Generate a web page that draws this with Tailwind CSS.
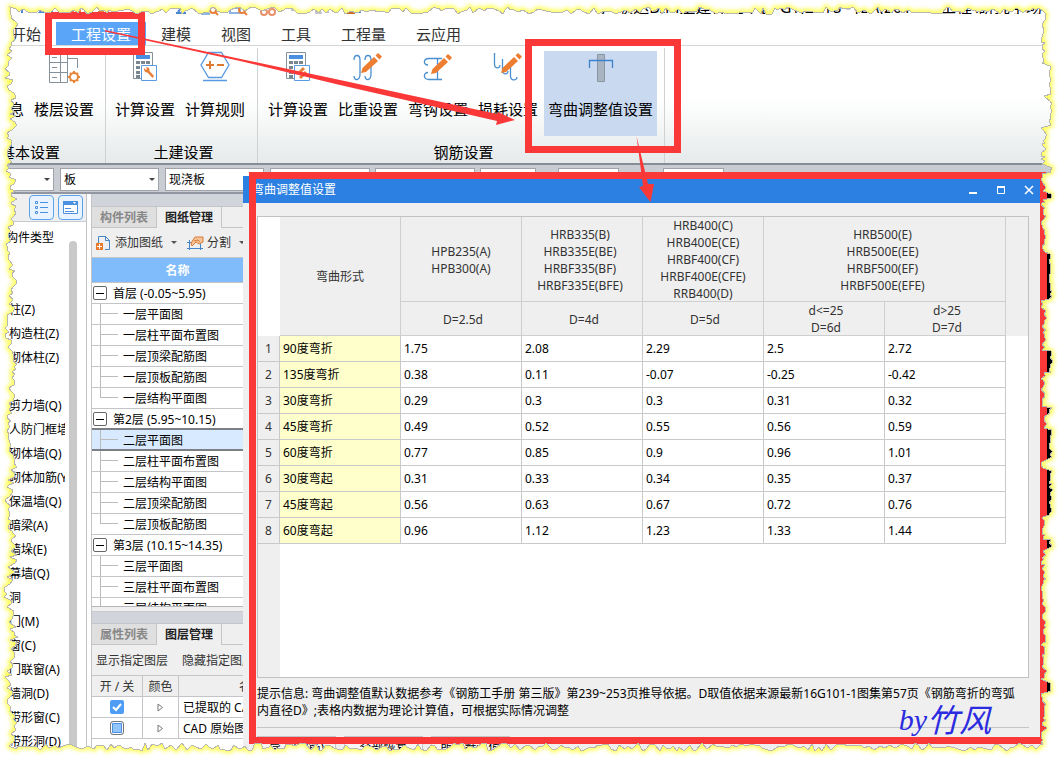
<!DOCTYPE html>
<html lang="zh-CN">
<head>
<meta charset="utf-8">
<title>弯曲调整值设置</title>
<script src="https://cdn.jsdelivr.net/npm/@tailwindcss/browser@4"></script>
</head>
<body class="bg-white text-black font-['Noto_Sans','Noto_Sans_CJK_SC',sans-serif]">
<div class="relative flex h-screen flex-col overflow-hidden bg-white text-[12px] leading-[17px]">

  <!-- title bar -->
  <header class="flex h-[22px] shrink-0 justify-between whitespace-nowrap">
    <div class="flex w-[410px] shrink-0 pl-5" aria-hidden="true">
      <svg class="h-4 w-[380px]" viewBox="0 0 380 16" fill="none" stroke-width="2">
        <path d="M2 2V13M20 12L26 4L32 12Z" stroke="#4a86d0"/>
        <path d="M48 12H54M60 8V13M78 12H84" stroke="#e8803a"/>
        <path d="M90 1H118V12M156 13H166M158 12L164 5" stroke="#4a86d0"/>
        <path d="M182 2V14H190M210 13H220V8H210Z" stroke="#8fb4e0"/>
        <circle cx="193" cy="10" r="3" stroke="#e8803a"/><path d="M195 12L198 15" stroke="#e8803a"/>
        <circle cx="222" cy="10" r="3" stroke="#e8803a"/><path d="M224 12L227 15" stroke="#e8803a"/>
        <circle cx="244" cy="12" r="3" stroke="#e8906a"/><circle cx="252" cy="12" r="3" stroke="#e8906a"/>
        <path d="M271 10H283M296 4V13H302M308 4V13" stroke="#c4c8ce"/>
        <path d="M327 7H334V13H327Z" fill="#e8803a" stroke="#c86a28"/><path d="M328 10H333M330 8V12" stroke="#fff" stroke-width="1"/>
        <path d="M336 12H341" stroke="#4a86d0"/>
      </svg>
    </div>
    <h1 class="mr-4 -mt-1 h-[18px] overflow-hidden text-[16px] leading-[22px]">广联达BIM土建计量平台 GTJ2018 - [E:\(2019-1-工程\研究学场</h1>
  </header>

  <!-- ribbon tabs -->
  <nav class="-ml-1 flex h-6 shrink-0 items-stretch border-b border-[#d4d6d8] text-[15px] leading-[22px] text-[#333]">
    <button class="px-[15px]">开始</button>
    <button class="bg-[#5aa5f8] px-[15px] text-white">工程设置</button>
    <button class="px-[15px]">建模</button>
    <button class="px-[15px]">视图</button>
    <button class="px-[15px]">工具</button>
    <button class="px-[15px]">工程量</button>
    <button class="px-[15px]">云应用</button>
  </nav>

  <!-- ribbon -->
  <section class="-ml-[41px] flex h-[119px] shrink-0 whitespace-nowrap border-b-2 border-[#858d95] bg-linear-to-b from-white from-45% to-[#e6eaea] pt-[2px] text-[15px] leading-[22px]">
    <div class="flex w-[147px] flex-col justify-between border-r border-[#cfd2d4]">
      <div class="flex pt-[3px]">
        <button class="flex w-[70px] flex-col items-center"><span class="h-[47px]"></span>工程信息</button>
        <button class="flex w-[70px] flex-col items-center"><span class="flex h-[47px] w-9"><svg width="36" height="34" viewBox="0 0 36 34" fill="none" stroke="#84909a"><path d="M3.500 1.500H21.500V31.500H3.500ZM3.500 11.500H21.500M3.500 21.500H21.500M14.500 1.500V31.500M6 6.500H11M6 16.500H11M6 26.500H11M21.500 7.500H31.500V17"/><circle cx="28" cy="26" r="4" stroke="#e8873a" stroke-width="2"/><path d="M28 20V22M28 30V32M22 26H24M32 26H34M24 22L25 23M31 29L32 30M32 22L31 23M25 29L24 30" stroke="#e8873a" stroke-width="2"/></svg></span>楼层设置</button>
      </div>
      <span class="pr-1 text-center">基本设置</span>
    </div>
    <div class="flex w-[152px] flex-col justify-between border-r border-[#cfd2d4] pl-1">
      <div class="flex pt-[3px]">
        <button class="flex w-[70px] flex-col items-center"><span class="flex h-[47px]"><svg width="26" height="32" viewBox="0 0 26 32" fill="none"><path d="M1.500 1.500H20.500V27.500H1.500Z" fill="#fff" stroke="#84909a"/><path d="M4 4H18V8H4Z" fill="#4a8fe0"/><path d="M4 11.500H18M4 16.500H18M4 21.500H10M4 25.500H8" stroke="#7a868f" stroke-width="3" stroke-dasharray="4 1"/><path d="M9.500 14.500H24.500V29.500H9.500Z" fill="#fff" stroke="#5a9ae0"/><path d="M12 17L14 19L15 17.500L13.500 16.500C17 15.500 18 18 17.500 20L22 25L20.500 27L15.500 21.500C13 22 11.500 19 12 17Z" fill="#e8803a"/></svg></span>计算设置</button>
        <button class="flex w-[70px] flex-col items-center"><span class="flex h-[47px]"><svg width="32" height="32" viewBox="0 0 32 32" fill="none"><path d="M9.500 1.500H22.500L30 14L22.500 26.500H9.500L2 14ZM4 29.500H28" stroke="#5a9ae0" stroke-width="1.300"/><path d="M7 14H15M11 10V18M18 14H25" stroke="#e07a30" stroke-width="2"/></svg></span>计算规则</button>
      </div>
      <span class="text-center">土建设置</span>
    </div>
    <div class="flex w-[407px] flex-col justify-between border-r border-[#cfd2d4] pl-[5px]">
      <div class="flex">
        <button class="flex w-[70px] flex-col items-center pt-[3px]"><span class="flex h-[47px]"><svg width="26" height="32" viewBox="0 0 26 32" fill="none"><path d="M1.500 1.500H20.500V27.500H1.500Z" fill="#fff" stroke="#84909a"/><path d="M4 4H18V8H4Z" fill="#4a8fe0"/><path d="M4 11.500H18M4 16.500H18M4 21.500H10M4 25.500H8" stroke="#7a868f" stroke-width="3" stroke-dasharray="4 1"/><path d="M9.500 14.500H24.500V29.500H9.500Z" fill="#fff" stroke="#5a9ae0"/><path d="M13 23L19 17M15 27L21 21" stroke="#e8803a" stroke-width="3"/></svg></span>计算设置</button>
        <button class="flex w-[70px] flex-col items-center pt-[3px]"><span class="flex h-[47px]"><svg width="32" height="32" viewBox="0 0 32 32" fill="none"><path d="M2 9C2 3 8 3 8 9V23C8 30 2 30 2 25M13 9C13 3 19 3 19 9V23C19 30 13 30 13 25" stroke="#4a8fd0" stroke-width="1.300"/><path d="M9 22L10.500 17L22 6L26 10L14 21Z" fill="#ed7d31"/><path d="M23.500 4.500L26 2L30 5.500L27.500 8.500Z" fill="#ed7d31"/></svg></span>比重设置</button>
        <button class="flex w-[70px] flex-col items-center pt-[3px]"><span class="flex h-[47px]"><svg width="32" height="32" viewBox="0 0 32 32" fill="none"><path d="M20 7.500H7C1 7.500 1 14 6 14M20 28.500H7C1 28.500 1 21.500 6 21.500M15.500 8V28" stroke="#4a8fd0" stroke-width="1.300"/><path d="M9 23L10.500 18L22 7L26 11L14 22Z" fill="#ed7d31"/><path d="M23.500 5.500L26 3L30 6.500L27.500 9.500Z" fill="#ed7d31"/></svg></span>弯钩设置</button>
        <button class="flex w-[70px] flex-col items-center pt-[3px]"><span class="flex h-[47px]"><svg width="32" height="32" viewBox="0 0 32 32" fill="none"><path d="M2.500 2V13C2.500 18 8 18 8 14M10.500 8V19C10.500 24 16 24 16 20M18.500 14V25C18.500 30 25 30 25 26" stroke="#4a8fd0" stroke-width="1.300"/><path d="M9 22L10.500 17L22 6L26 10L14 21Z" fill="#ed7d31"/><path d="M23.500 4.500L26 2L30 5.500L27.500 8.500Z" fill="#ed7d31"/></svg></span>损耗设置</button>
        <button class="mt-[3px] ml-px flex h-[85px] w-[113px] flex-col items-center bg-[#c9d9f0]"><span class="flex h-[47px]"><svg width="28" height="32" viewBox="0 0 28 32" fill="none"><path d="M10.500 3.500H17.500V30.500H10.500Z" fill="#a9b4c2" stroke="#8a96a3"/><path d="M2.500 17V9.500H25.500V17" stroke="#3c82cc" stroke-width="1.300"/></svg></span>弯曲调整值设置</button>
      </div>
      <span class="text-center">钢筋设置</span>
    </div>
  </section>

  <!-- selector row -->
  <div class="-ml-[46px] flex h-[29px] shrink-0 items-start border-b-2 border-[#9296a0] bg-[#c9ccd2] pt-[3px] leading-[20px]">
    <div class="relative mr-[6px]"><select aria-label="楼层" class="block h-[23px] w-[100px] appearance-none border border-[#a0a4aa] bg-white px-[3px]"><option></option></select><span class="pointer-events-none absolute right-1 top-[10px] border-x-[3px] border-t-[3px] border-x-transparent border-t-[#444]"></span></div>
    <div class="relative mr-[6px]"><select aria-label="类型" class="block h-[23px] w-[99px] appearance-none border border-[#a0a4aa] bg-white px-[3px]"><option>板</option></select><span class="pointer-events-none absolute right-1 top-[10px] border-x-[3px] border-t-[3px] border-x-transparent border-t-[#444]"></span></div>
    <select aria-label="构件类型" class="mr-[6px] h-[23px] w-[99px] appearance-none border border-[#a0a4aa] bg-white px-[3px]"><option>现浇板</option></select>
    <select aria-label="构件" class="mr-[5px] h-[23px] w-[100px] appearance-none border border-[#a0a4aa] bg-white"></select>
    <select aria-label="图层" class="mr-[5px] h-[23px] w-[100px] appearance-none border border-[#a0a4aa] bg-white"></select>
    <select aria-label="分层" class="mr-[22px] h-[23px] w-[56px] appearance-none border border-[#a0a4aa] bg-white"></select>
    <select aria-label="偏移" class="mr-[44px] h-[23px] w-[61px] appearance-none border border-[#a0a4aa] bg-white"></select>
    <select aria-label="角度" class="h-[23px] w-[61px] appearance-none border border-[#a0a4aa] bg-white"></select>
  </div>

  <div class="flex min-h-0 flex-1">
    <!-- component list -->
    <aside class="flex w-[87px] shrink-0 flex-col border-r border-[#c3c5c8]">
      <div class="flex h-[28px] shrink-0 items-center gap-1 border-b border-[#c9cbce] bg-[#efefef] pl-[29px]">
        <button aria-label="列表视图" class="flex size-[25px] items-center justify-center rounded-[4px] border border-[#5ba3ee] bg-[#e8f3ff]"><svg width="15" height="15" viewBox="0 0 15 15" fill="none" stroke="#4a90e0"><path d="M1.500 1.500H3.500V3.500H1.500ZM1.500 6.500H3.500V8.500H1.500ZM1.500 11.500H3.500V13.500H1.500ZM6 2.500H14M6 7.500H14M6 12.500H14"/></svg></button>
        <button aria-label="属性窗口" class="flex size-[25px] items-center justify-center rounded-[4px] border border-[#5ba3ee] bg-[#e8f3ff]"><svg width="17" height="15" viewBox="0 0 17 15" fill="none" stroke="#4a90e0"><path d="M1.500 1.500H15.500V13.500H1.500Z" fill="#fff"/><path d="M1 1H16V5H1Z" fill="#4a90e0" stroke="none"/><path d="M3 8.500H9M3 11.500H12"/><path d="M11 2H14L12.500 4Z" fill="#fff" stroke="none"/></svg></button>
      </div>
      <div class="flex min-h-0 flex-1 pt-1">
        <ul id="types" class="w-[65px] overflow-hidden whitespace-nowrap pl-[9px] leading-[24px]"></ul>
        <div class="ml-1 mt-[15px] w-2 rounded-t-[4px] bg-[#c9c9c9]"></div>
      </div>
    </aside>

    <!-- drawings and layers -->
    <section class="ml-1 flex w-[152px] shrink-0 flex-col overflow-hidden whitespace-nowrap border-l border-[#c3c5c8] bg-[#efefef]">
      <div class="h-[12px] shrink-0 bg-[#d2d4dc]"></div>
      <div class="flex h-[22px] shrink-0 border-t border-[#c3c5c8] font-bold">
        <button class="w-[65px] border-r border-b border-[#c3c5c8] bg-[#dfdfdf] text-[#888]">构件列表</button>
        <button class="w-[65px] border-r border-[#c3c5c8] text-[#222]">图纸管理</button>
        <span class="flex-1 border-b border-[#c3c5c8]"></span>
      </div>
      <div class="flex h-[30px] shrink-0 items-center border-b border-[#c3c5c8] pl-1 text-[#333]">
        <button class="flex items-center gap-1"><svg width="15" height="16" viewBox="0 0 15 16" fill="none"><path d="M2.500 8V1.500H9.500L13.500 5.500V14.500H9M9.500 1.500V5.500H13.500" stroke="#4486c8"/><path d="M0 8H7V15H0Z" fill="#e87a30"/><path d="M1 11.500H6M3.500 9V14" stroke="#fff"/></svg>添加图纸</button>
        <span class="ml-2 border-x-[3px] border-t-[3px] border-x-transparent border-t-[#555]"></span>
        <button class="ml-[10px] flex items-center gap-[3px]"><svg width="17" height="16" viewBox="0 0 17 16" fill="none"><path d="M2.500 5V15M13.500 8V15M0 13.500H16M0 7.500H4" stroke="#4486c8"/><path d="M4 8L8 2H16V7L12 9L9 7L5 11Z" fill="#f6c49a" stroke="#d87a34"/><path d="M7 6L11 5L13 7" stroke="#d87a34"/></svg>分割</button>
        <span class="ml-2 border-x-[3px] border-t-[3px] border-x-transparent border-t-[#555]"></span>
      </div>
      <div class="h-[25px] shrink-0 border-b border-[#c3c5c8] bg-[#80bbfb] pl-5 text-center font-bold leading-[25px] text-white">名称</div>
      <ul id="tree" class="min-h-0 flex-1 overflow-hidden border-b border-[#b4b6ba] bg-white leading-[21px]"></ul>
      <div class="mt-1 h-[12px] shrink-0 border-t border-[#c9cbce] bg-[#d2d4dc]"></div>
      <div class="flex h-[22px] shrink-0 border-t border-[#c3c5c8] font-bold">
        <button class="w-[65px] border-r border-b border-[#c3c5c8] bg-[#dfdfdf] text-[#888]">属性列表</button>
        <button class="w-[65px] border-r border-[#c3c5c8] text-[#222]">图层管理</button>
        <span class="flex-1 border-b border-[#c3c5c8]"></span>
      </div>
      <div class="flex h-[30px] shrink-0 items-center gap-[14px] pl-1 text-[#333]"><button class="shrink-0">显示指定图层</button><button class="shrink-0">隐藏指定图层</button></div>
      <table class="w-[192px] shrink-0 table-fixed border-separate border-spacing-0 bg-white">
        <colgroup><col class="w-[51px]"><col class="w-[36px]"><col></colgroup>
        <thead><tr class="h-[22px] bg-[#efefef] text-[#333]">
          <th class="border-y border-r border-[#c3c5c8] font-normal">开 / 关</th><th class="border-y border-r border-[#c3c5c8] font-normal">颜色</th><th class="border-y border-[#c3c5c8] pr-0 pl-[60px] text-left font-normal">名称</th></tr></thead>
        <tbody>
          <tr class="h-[21px]"><td class="border-r border-b border-[#c3c5c8]"><label class="flex justify-center"><input type="checkbox" checked aria-label="已提取的 CAD 图层" class="absolute size-[14px] appearance-none"><span class="flex size-[14px] items-center justify-center rounded-[2px] bg-[#4f9cf5]"><svg width="10" height="9" viewBox="0 0 10 9" fill="none" stroke="#fff" stroke-width="2"><path d="M1 4L4 7L9 1"/></svg></span></label></td>
            <td class="border-r border-b border-[#c3c5c8]"><svg class="mx-auto" width="7" height="9" viewBox="0 0 7 9" fill="none" stroke="#777"><path d="M1 1L5.500 4.500L1 8Z"/></svg></td><td class="border-b border-[#c3c5c8] pl-1">已提取的 CAD 图层</td></tr>
          <tr class="h-[21px]"><td class="border-r border-b border-[#c3c5c8]"><input type="checkbox" aria-label="CAD 原始图层" class="mx-auto block size-[14px] appearance-none rounded-[3px] border border-[#777] bg-[#92c5fc] shadow-[inset_0_0_0_1px_#fff,inset_0_0_0_2px_#4a90e0]"></td>
            <td class="border-r border-b border-[#c3c5c8]"><svg class="mx-auto" width="7" height="9" viewBox="0 0 7 9" fill="none" stroke="#777"><path d="M1 1L5.500 4.500L1 8Z"/></svg></td><td class="border-b border-[#c3c5c8] pl-1">CAD 原始图层</td></tr>
        </tbody>
      </table>
      <div class="h-[19px] shrink-0 bg-white"></div>
    </section>
  </div>

  <!-- desktop strip beside the dialog -->
  <div class="absolute top-[190px] right-0 bottom-0 w-[12px] bg-black"></div>

  <!-- dialog -->
  <div role="dialog" aria-labelledby="dlg" class="absolute top-[176px] right-[18px] bottom-0 left-[243px] flex flex-col bg-[#efefef]">
    <div class="flex h-[27px] shrink-0 items-center justify-between bg-[#2b80e2] pr-[6px] pl-[9px] text-white">
      <h2 id="dlg" class="text-[12px]">弯曲调整值设置</h2>
      <div class="flex gap-[18px]">
        <button aria-label="最小化"><svg width="10" height="10" viewBox="0 0 10 10" fill="none" stroke="#fff"><path d="M1 8H9" stroke-width="2"/></svg></button>
        <button aria-label="最大化"><svg width="10" height="10" viewBox="0 0 10 10" fill="none" stroke="#fff"><path d="M1.500 2V8.500H8.500V2"/><path d="M1 2H9" stroke-width="2"/></svg></button>
        <button aria-label="关闭"><svg width="10" height="10" viewBox="0 0 10 10" fill="none" stroke="#fff" stroke-width="1.500"><path d="M1 1L9 9M9 1L1 9"/></svg></button>
      </div>
    </div>
    <div class="flex min-h-0 flex-1 flex-col pt-[13px] pr-[11px] pl-[14px]">
      <div class="min-h-0 flex-1 overflow-hidden border border-[#c0c2c4] bg-[linear-gradient(to_right,#efefef_22px,#ffffff_22px)]">
        <table class="w-full table-fixed border-separate border-spacing-0">
          <colgroup><col class="w-[22px]"><col class="w-[121px]"><col class="w-[121px]"><col class="w-[121px]"><col class="w-[121px]"><col class="w-[121px]"><col class="w-[121px]"><col></colgroup>
          <thead class="bg-[#efefef] text-[#333]">
            <tr class="h-[85px]">
              <td rowspan="2" class="bg-white"></td>
              <th rowspan="2" class="border-r border-b border-[#cdcfd1] font-normal">弯曲形式</th>
              <th class="border-r border-b border-[#cdcfd1] p-0 pt-[2px] font-normal">HPB235(A)<br>HPB300(A)</th>
              <th class="border-r border-b border-[#cdcfd1] p-0 pt-[2px] pr-1 font-normal">HRB335(B)<br>HRB335E(BE)<br>HRBF335(BF)<br>HRBF335E(BFE)</th>
              <th class="border-r border-b border-[#cdcfd1] p-0 font-normal"><div class="-mb-px">HRB400(C)<br>HRB400E(CE)<br>HRBF400(CF)<br>HRBF400E(CFE)<br>RRB400(D)</div></th>
              <th colspan="2" class="border-r border-b border-[#cdcfd1] p-0 pt-[2px] pr-1 font-normal">HRB500(E)<br>HRB500E(EE)<br>HRBF500(EF)<br>HRBF500E(EFE)</th>
              <td rowspan="2"></td>
            </tr>
            <tr class="h-[34px]">
              <th class="border-r border-b border-[#cdcfd1] p-0 pt-[2px] pl-1 font-normal">D=2.5d</th>
              <th class="border-r border-b border-[#cdcfd1] p-0 pt-[2px] pl-1 font-normal">D=4d</th>
              <th class="border-r border-b border-[#cdcfd1] p-0 pt-[2px] pl-1 font-normal">D=5d</th>
              <th class="border-r border-b border-[#cdcfd1] p-0 font-normal"><div class="-mb-px pl-1">d&lt;=25<br>D=6d</div></th>
              <th class="border-r border-b border-[#cdcfd1] p-0 font-normal"><div class="-mb-px pl-1">d&gt;25<br>D=7d</div></th>
            </tr>
          </thead>
          <tbody id="values"></tbody>
        </table>
      </div>
      <p class="mt-[7px] shrink-0 pr-2">提示信息: 弯曲调整值默认数据参考《钢筋工手册 第三版》第239~253页推导依据。D取值依据来源最新16G101-1图集第57页《钢筋弯折的弯弧内直径D》;表格内数据为理论计算值，可根据实际情况调整</p>
      <div class="mt-2 flex h-[31px] shrink-0 gap-2 border-t border-[#c3c5c8] pt-[8px]">
        <button class="h-[23px] w-[79px] shrink-0 border border-[#c3c5c8] bg-[#f6f6f6]">导入(钢筋)</button>
        <button class="h-[23px] w-[79px] shrink-0 border border-[#c3c5c8] bg-[#f6f6f6]">全部恢复</button>
        <button class="h-[23px] w-[79px] shrink-0 border border-[#c3c5c8] bg-[#f6f6f6]">所有默认值</button>
      </div>
    </div>
  </div>

  <!-- hand-drawn marks -->
  <div class="pointer-events-none absolute top-[172px] right-[11px] bottom-[14px] left-[249px] border-[7px] border-[#fb3838]"></div>
  <div class="pointer-events-none absolute top-[12px] left-[45px] h-[43px] w-[100px] border-[7px] border-[#fb3838]"></div>
  <div class="pointer-events-none absolute top-[39px] left-[525px] h-[114px] w-[156px] border-[7px] border-[#fb3838]"></div>
  <svg class="pointer-events-none absolute top-0 left-0 h-[210px] w-[700px]" viewBox="0 0 700 210" fill="#fb3838">
    <path d="M105 30L340 80L497 114L498 112L515 120L496 125L497 121L340 85L240 61L105 31.500Z"/>
    <path d="M636.500 136L648 184L654 184L650.500 202L639 187L643 186Z"/>
  </svg>
  <div class="pointer-events-none absolute right-[67px] bottom-[20px] flex items-center text-[#2b2be0]"><span class="font-['Liberation_Serif',serif] text-[30px] italic leading-[36px]">by</span><span class="text-[32px] italic leading-[36px]">竹风</span></div>

  <!-- torn paper edge -->
  <svg id="torn" class="pointer-events-none absolute inset-0 h-full w-full" aria-hidden="true">
    <defs>
      <clipPath id="outside"><path id="clipShape" clip-rule="evenodd"/></clipPath>
      <filter id="glow" x="-5%" y="-5%" width="110%" height="110%"><feGaussianBlur stdDeviation="2"/></filter>
    </defs>
    <path id="paper" fill="#fff" fill-rule="evenodd"/>
    <g clip-path="url(#outside)"><path id="halo" fill="none" stroke="#ffff50" stroke-width="5" stroke-linejoin="round" filter="url(#glow)"/></g>
    <path id="rim" fill="none" stroke="#b8b8b0" stroke-width="1" shape-rendering="crispEdges"/>
  </svg>
</div>

<script>
const types = ['构件类型','','','柱(Z)','构造柱(Z)','砌体柱(Z)','','剪力墙(Q)','人防门框墙(RF)','砌体墙(Q)','砌体加筋(Y)','保温墙(Q)','暗梁(A)','墙垛(E)','幕墙(Q)','洞','门(M)','窗(C)','门联窗(A)','墙洞(D)','带形窗(C)','带形洞(D)'];
document.getElementById('types').innerHTML = types.map((t, i) => `<li class="${i ? 'h-6' : 'h-6 -ml-[3px]'}">${t}</li>`).join('');

const floors = [
  ['首层 (-0.05~5.95)', ['一层平面图','一层柱平面布置图','一层顶梁配筋图','一层顶板配筋图','一层结构平面图']],
  ['第2层 (5.95~10.15)', ['二层平面图','二层柱平面布置图','二层结构平面图','二层顶梁配筋图','二层顶板配筋图']],
  ['第3层 (10.15~14.35)', ['三层平面图','三层柱平面布置图','三层结构平面图']]
];
document.getElementById('tree').innerHTML = floors.map(([name, kids], f) =>
  `<li class="flex h-[21px] items-center border-b border-[#c3c5c8] pl-[1px]"><button aria-label="折叠" class="mr-[6px] flex size-[14px] items-center justify-center rounded-[2px] border border-[#666] bg-white"><span class="h-px w-[8px] bg-black"></span></button>${name}</li>` +
  kids.map((k, i) =>
    `<li class="${k === '二层平面图' ? 'flex h-[21px] border-b-2 border-[#7c7f84] bg-[#d8eaff] shadow-[0_-1px_0_1px_#7c7f84]' : 'flex h-[21px] border-b border-[#c3c5c8]'}"><span class="ml-[8px] mr-[5px] flex w-[18px] flex-col"><span class="h-[10px] shrink-0 border-b border-l border-[#bbb]"></span><span class="${i === kids.length - 1 && f < 2 ? 'flex-1' : 'flex-1 border-l border-[#bbb]'}"></span></span>${k}</li>`
  ).join('')).join('');

const rows = [
  ['90度弯折','1.75','2.08','2.29','2.5','2.72'],
  ['135度弯折','0.38','0.11','-0.07','-0.25','-0.42'],
  ['30度弯折','0.29','0.3','0.3','0.31','0.32'],
  ['45度弯折','0.49','0.52','0.55','0.56','0.59'],
  ['60度弯折','0.77','0.85','0.9','0.96','1.01'],
  ['30度弯起','0.31','0.33','0.34','0.35','0.37'],
  ['45度弯起','0.56','0.63','0.67','0.72','0.76'],
  ['60度弯起','0.96','1.12','1.23','1.33','1.44']
];
document.getElementById('values').innerHTML = rows.map((r, i) =>
  `<tr class="h-[26px]"><th class="border-r border-b border-[#c8caca] bg-[#efefef] p-0 font-normal text-[#333]">${i + 1}</th>` +
  r.map((v, j) => `<td class="${j ? 'border-r border-b border-[#c8caca] bg-white py-0 px-[3px]' : 'border-r border-b border-[#c8caca] bg-[#ffffcc] py-0 px-[3px]'}">${v}</td>`).join('') +
  '</tr>').join('');

// Torn edge: a jagged outline walked clockwise round the window.
function tear() {
  const W = innerWidth, H = innerHeight;
  let s = 7;
  const rnd = () => (s = (s * 16807) % 2147483647) / 2147483647;
  const bulges = [[65,95],[100,125],[165,172],[192,198],[254,300],[350,372],[407,414],[430,460],[470,515],[540,550],[680,692]];
  const pts = [];
  for (let x = 10; x < W - 16; x += 2 + rnd() * 4) pts.push([x, 7 + rnd() * 7]);
  for (let y = 12; y < H - 12; y += 1 + rnd() * 3) {
    const out = bulges.some(([a, b]) => y >= a && y <= b);
    pts.push([W - (out ? 6 + rnd() * 3 : 12 + rnd() * 5), y]);
  }
  for (let x = W - 16; x > 14; x -= 2 + rnd() * 4) pts.push([x, H - 7 - rnd() * 8]);
  for (let y = H - 12; y > 12; y -= 2 + rnd() * 2) pts.push([11 + 3 * Math.sin(y / 14) + (rnd() - .5) * 8, y]);
  const line = 'M' + pts.map(p => p.map(Math.round).join(' ')).join('L') + 'Z';
  const outer = `M-9 -9H${W + 9}V${H + 9}H-9Z` + line;
  document.getElementById('paper').setAttribute('d', outer);
  document.getElementById('clipShape').setAttribute('d', outer);
  document.getElementById('halo').setAttribute('d', line);
  document.getElementById('rim').setAttribute('d', line);
}
tear();
addEventListener('resize', tear);
</script>
</body>
</html>
